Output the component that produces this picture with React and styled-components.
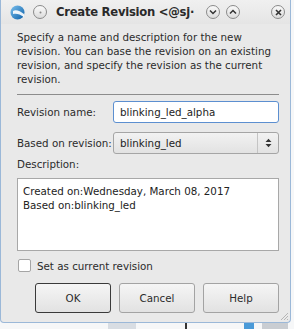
import React from "react";
import styled, { createGlobalStyle } from "styled-components";

const Global = createGlobalStyle`
  html, body { margin: 0; padding: 0; background: #f6f7f8; }
  body { font-family: "DejaVu Sans", "Liberation Sans", sans-serif; }
  * { box-sizing: border-box; }
`;

const Page = styled.div`
  width: 294px;
  height: 329px;
  position: relative;
  overflow: hidden;
`;

const Window = styled.div`
  width: 291px;
  height: 323px;
  border: 1px solid #9bb8d8;
  border-top: none;
  border-radius: 0 0 4px 4px;
  background: #e9e9e9;
  display: flex;
  flex-direction: column;
  position: relative;
`;

const TitleBar = styled.div`
  height: 24px;
  display: flex;
  align-items: center;
  padding: 0 0 0 9px;
  background: linear-gradient(#f0f0f0, #e5e5e5);
`;

const TitleText = styled.div`
  font-weight: bold;
  font-size: 11.6px;
  letter-spacing: -0.25px;
  color: #2a2a2a;
  margin-left: 9px;
  width: 148px;
  white-space: nowrap;
`;

const CircleBtn = styled.div`
  width: 14px;
  height: 14px;
  border-radius: 50%;
  border: 1px solid #8a8a8a;
  background: linear-gradient(#fafafa, #dcdcdc);
  display: flex;
  align-items: center;
  justify-content: center;
  margin-left: ${(p) => p.$ml || 0}px;
  flex-shrink: 0;
`;

const Body = styled.div`
  padding: 6px 11px 0 16px;
  display: flex;
  flex-direction: column;
  flex: 1;
`;

const Intro = styled.p`
  margin: 0;
  font-size: 10.3px;
  line-height: 14px;
  color: #2b2b2b;
`;

const Separator = styled.div`
  height: 1px;
  background: #8c8c8c;
  margin: 8px 0 5px 0;
`;

const FormRow = styled.div`
  display: flex;
  align-items: center;
  height: 23px;
  margin-bottom: ${(p) => (p.$last ? 4 : 8)}px;
`;

const Label = styled.div`
  width: 96px;
  font-size: 10.3px;
  color: #2b2b2b;
  white-space: nowrap;
`;

const TextInput = styled.div`
  flex: 1;
  height: 22px;
  border: 1px solid #5c8fd0;
  border-radius: 3px;
  background: #fff;
  font-size: 10.3px;
  color: #222;
  display: flex;
  align-items: center;
  padding-left: 6px;
`;

const Select = styled.div`
  flex: 1;
  height: 22px;
  border: 1px solid #a5a5a5;
  border-radius: 3px;
  background: linear-gradient(#f2f2f2, #e2e2e2);
  font-size: 10.3px;
  color: #222;
  display: flex;
  align-items: center;
  padding-left: 6px;
`;

const SelectText = styled.span`
  flex: 1;
`;

const Spin = styled.div`
  width: 21px;
  height: 100%;
  border-left: 1px solid #c4c4c4;
  display: flex;
  align-items: center;
  justify-content: center;
`;

const SectionLabel = styled.div`
  font-size: 10.3px;
  line-height: 12px;
  color: #2b2b2b;
  margin: 0 0 8px 0;
`;

const TextArea = styled.div`
  height: 73px;
  border: 1px solid #a8a8a8;
  background: #fff;
  padding: 5px 5px;
  font-size: 10.3px;
  line-height: 14px;
  color: #222;
`;

const CheckRow = styled.label`
  display: flex;
  align-items: center;
  margin: 8px 0 0 1px;
  font-size: 10.3px;
  color: #2b2b2b;
`;

const CheckBox = styled.span`
  width: 13px;
  height: 13px;
  border: 1px solid #a5a5a5;
  border-radius: 2px;
  background: #fff;
  margin-right: 6px;
`;

const ButtonRow = styled.div`
  display: flex;
  justify-content: flex-end;
  gap: 8px;
  margin-top: 11px;
`;

const Button = styled.div`
  width: 76px;
  height: 30px;
  border-radius: 3px;
  border: 1px solid ${(p) => (p.$default ? "#3a3a3a" : "#a3a3a3")};
  background: linear-gradient(#f5f5f5, #e2e2e2);
  display: flex;
  align-items: center;
  justify-content: center;
  font-size: 10.3px;
  color: #2b2b2b;
`;

const Grip = styled.svg`
  position: absolute;
  right: 1px;
  bottom: 1px;
`;

const Below = styled.div`
  position: absolute;
  left: 0;
  top: 323px;
  width: 294px;
  height: 6px;
`;

const Frag = styled.div`
  position: absolute;
  top: 0;
  left: ${(p) => p.$x}px;
  width: ${(p) => p.$w}px;
  height: 6px;
  background: ${(p) => p.$c};
`;

function AppIcon() {
  return (
    <svg width="15" height="15" viewBox="0 0 15 15">
      <defs>
        <linearGradient id="ai" x1="0" y1="0" x2="1" y2="1">
          <stop offset="0" stopColor="#7cc0ee" />
          <stop offset="1" stopColor="#0b5fa8" />
        </linearGradient>
      </defs>
      <circle cx="7.5" cy="7.5" r="7" fill="url(#ai)" />
      <path d="M3 6 C6 4, 10 6, 14 9 L14 12 C10 9, 6 8, 3 9 Z" fill="#ffffff" opacity="0.9" />
    </svg>
  );
}

export default function App() {
  return (
    <Page>
      <Global />
      <Window>
        <TitleBar>
          <AppIcon />
          <CircleBtn $ml={8}>
            <svg width="3" height="3"><circle cx="1.5" cy="1.5" r="1" fill="#888" /></svg>
          </CircleBtn>
          <TitleText>Create Revision &lt;@sj·</TitleText>
          <CircleBtn $ml={2}>
            <svg width="8" height="6" viewBox="0 0 8 6"><path d="M1 1.5 L4 4.5 L7 1.5" stroke="#333" strokeWidth="1.5" fill="none" /></svg>
          </CircleBtn>
          <CircleBtn $ml={6}>
            <svg width="8" height="6" viewBox="0 0 8 6"><path d="M1 4.5 L4 1.5 L7 4.5" stroke="#333" strokeWidth="1.5" fill="none" /></svg>
          </CircleBtn>
          <CircleBtn $ml={31}>
            <svg width="7" height="7" viewBox="0 0 7 7"><path d="M1 1 L6 6 M6 1 L1 6" stroke="#333" strokeWidth="1.6" /></svg>
          </CircleBtn>
        </TitleBar>
        <Body>
          <Intro>
            Specify a name and description for the new revision. You can base the revision on an existing revision, and specify the revision as the current revision.
          </Intro>
          <Separator />
          <FormRow>
            <Label>Revision name:</Label>
            <TextInput>blinking_led_alpha</TextInput>
          </FormRow>
          <FormRow $last>
            <Label>Based on revision:</Label>
            <Select>
              <SelectText>blinking_led</SelectText>
              <Spin>
                <svg width="7" height="10" viewBox="0 0 7 10">
                  <path d="M0.5 4 L3.5 0.8 L6.5 4 Z M0.5 6 L3.5 9.2 L6.5 6 Z" fill="#333" />
                </svg>
              </Spin>
            </Select>
          </FormRow>
          <SectionLabel>Description:</SectionLabel>
          <TextArea>
            Created on:Wednesday, March 08, 2017
            <br />
            Based on:blinking_led
          </TextArea>
          <CheckRow>
            <CheckBox />
            Set as current revision
          </CheckRow>
          <ButtonRow>
            <Button $default>OK</Button>
            <Button>Cancel</Button>
            <Button>Help</Button>
          </ButtonRow>
        </Body>
        <Grip width="10" height="10" viewBox="0 0 10 10">
          <path d="M9 2 L2 9 M9 5 L5 9 M9 8 L8 9" stroke="#b5b5b5" strokeWidth="1" />
        </Grip>
      </Window>
      <Below>
        <Frag $x={108} $w={28} $c="#d8dde3" />
        <Frag $x={185} $w={2} $c="#333" />
        <Frag $x={244} $w={10} $c="#4a9ad8" />
        <Frag $x={262} $w={26} $c="#c9cdd2" />
      </Below>
    </Page>
  );
}
